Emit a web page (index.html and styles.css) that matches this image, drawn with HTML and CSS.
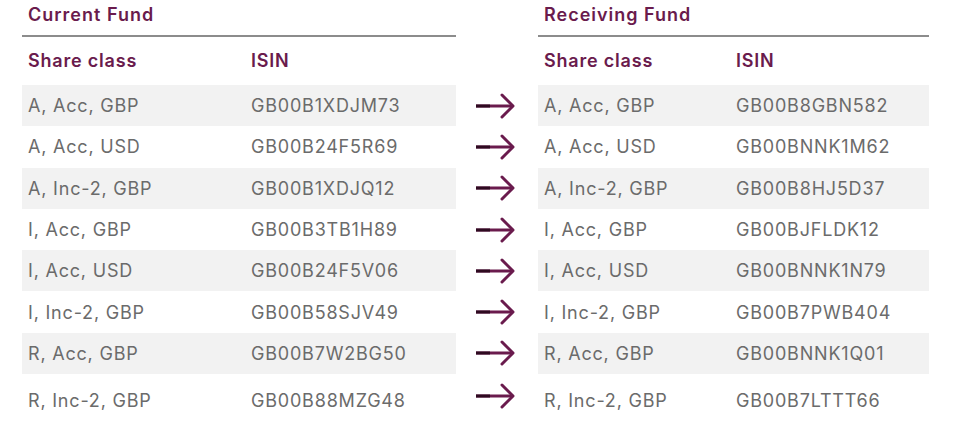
FILE: index.html
```html
<!DOCTYPE html>
<html lang="en">
<head>
<meta charset="utf-8">
<title>Fund share class mapping</title>
<link rel="stylesheet" href="styles.css">
</head>
<body>
<div class="mapping">
  <div class="row title-row">
    <div class="title left-title">Current Fund</div>
    <div class="gap"></div>
    <div class="title right-title">Receiving Fund</div>
  </div>
  <div class="row head-row">
    <div class="cell">Share class</div>
    <div class="cell">ISIN</div>
    <div class="gap"></div>
    <div class="cell">Share class</div>
    <div class="cell">ISIN</div>
  </div>

  <div class="row data shade">
    <div class="cell">A, Acc, GBP</div><div class="cell">GB00B1XDJM73</div>
    <div class="gap arrow"><svg viewBox="0 0 42 26" width="42" height="26"><path class="shaft" d="M1 13H38"/><path class="shaft-dark" d="M1 13H15"/><path class="head" d="M27 2L38 13L27 24"/></svg></div>
    <div class="cell">A, Acc, GBP</div><div class="cell">GB00B8GBN582</div>
  </div>
  <div class="row data">
    <div class="cell">A, Acc, USD</div><div class="cell">GB00B24F5R69</div>
    <div class="gap arrow"><svg viewBox="0 0 42 26" width="42" height="26"><path class="shaft" d="M1 13H38"/><path class="shaft-dark" d="M1 13H15"/><path class="head" d="M27 2L38 13L27 24"/></svg></div>
    <div class="cell">A, Acc, USD</div><div class="cell">GB00BNNK1M62</div>
  </div>
  <div class="row data shade">
    <div class="cell">A, Inc-2, GBP</div><div class="cell">GB00B1XDJQ12</div>
    <div class="gap arrow"><svg viewBox="0 0 42 26" width="42" height="26"><path class="shaft" d="M1 13H38"/><path class="shaft-dark" d="M1 13H15"/><path class="head" d="M27 2L38 13L27 24"/></svg></div>
    <div class="cell">A, Inc-2, GBP</div><div class="cell">GB00B8HJ5D37</div>
  </div>
  <div class="row data">
    <div class="cell">I, Acc, GBP</div><div class="cell">GB00B3TB1H89</div>
    <div class="gap arrow"><svg viewBox="0 0 42 26" width="42" height="26"><path class="shaft" d="M1 13H38"/><path class="shaft-dark" d="M1 13H15"/><path class="head" d="M27 2L38 13L27 24"/></svg></div>
    <div class="cell">I, Acc, GBP</div><div class="cell">GB00BJFLDK12</div>
  </div>
  <div class="row data shade">
    <div class="cell">I, Acc, USD</div><div class="cell">GB00B24F5V06</div>
    <div class="gap arrow"><svg viewBox="0 0 42 26" width="42" height="26"><path class="shaft" d="M1 13H38"/><path class="shaft-dark" d="M1 13H15"/><path class="head" d="M27 2L38 13L27 24"/></svg></div>
    <div class="cell">I, Acc, USD</div><div class="cell">GB00BNNK1N79</div>
  </div>
  <div class="row data">
    <div class="cell">I, Inc-2, GBP</div><div class="cell">GB00B58SJV49</div>
    <div class="gap arrow"><svg viewBox="0 0 42 26" width="42" height="26"><path class="shaft" d="M1 13H38"/><path class="shaft-dark" d="M1 13H15"/><path class="head" d="M27 2L38 13L27 24"/></svg></div>
    <div class="cell">I, Inc-2, GBP</div><div class="cell">GB00B7PWB404</div>
  </div>
  <div class="row data shade">
    <div class="cell">R, Acc, GBP</div><div class="cell">GB00B7W2BG50</div>
    <div class="gap arrow"><svg viewBox="0 0 42 26" width="42" height="26"><path class="shaft" d="M1 13H38"/><path class="shaft-dark" d="M1 13H15"/><path class="head" d="M27 2L38 13L27 24"/></svg></div>
    <div class="cell">R, Acc, GBP</div><div class="cell">GB00BNNK1Q01</div>
  </div>
  <div class="row data last">
    <div class="cell">R, Inc-2, GBP</div><div class="cell">GB00B88MZG48</div>
    <div class="gap arrow"><svg viewBox="0 0 42 26" width="42" height="26"><path class="shaft" d="M1 13H38"/><path class="shaft-dark" d="M1 13H15"/><path class="head" d="M27 2L38 13L27 24"/></svg></div>
    <div class="cell">R, Inc-2, GBP</div><div class="cell">GB00B7LTTT66</div>
  </div>
</div>
</body>
</html>
```

FILE: styles.css
```css
* { box-sizing: border-box; }

html, body {
  margin: 0;
  padding: 0;
  background: #ffffff;
}

body {
  font-family: "Inter", "Liberation Sans", Arial, sans-serif;
  font-size: 18px;
  color: #6b6b6b;
}

.mapping {
  padding-left: 22px;
  width: 961px;
}

.row {
  display: grid;
  grid-template-columns: 223px 211px 82px 192px 199px;
  align-items: stretch;
}

.title-row {
  grid-template-columns: 434px 82px 391px;
  height: 37px;
}

.title {
  font-weight: 600;
  color: #6a1b4d;
  font-size: 18px;
  line-height: 22px;
  padding: 4px 0 0 6px;
  border-bottom: 2px solid #8c8c8c;
  letter-spacing: 1px;
  white-space: nowrap;
}

.head-row {
  height: 48px;
}

.head-row .cell {
  font-weight: 600;
  color: #6a1b4d;
  padding-bottom: 2px;
  letter-spacing: 0.8px;
}

.cell {
  display: flex;
  align-items: center;
  padding-left: 6px;
  white-space: nowrap;
  letter-spacing: 0.8px;
}

.data {
  height: 41.3px;
}

.data.last {
  height: 52px;
}

.shade .cell {
  background: #f2f2f2;
}

.gap {
  background: transparent;
}

.arrow {
  display: flex;
  align-items: center;
  padding-left: 19px;
}

.arrow svg {
  display: block;
  fill: none;
  stroke-width: 3;
}

.shaft {
  stroke: #6a1b4d;
}

.shaft-dark {
  stroke: #2e0a20;
}

.head {
  stroke: #6a1b4d;
  stroke-linecap: round;
  stroke-linejoin: round;
}

.last .arrow {
  padding-bottom: 8px;
}
```
